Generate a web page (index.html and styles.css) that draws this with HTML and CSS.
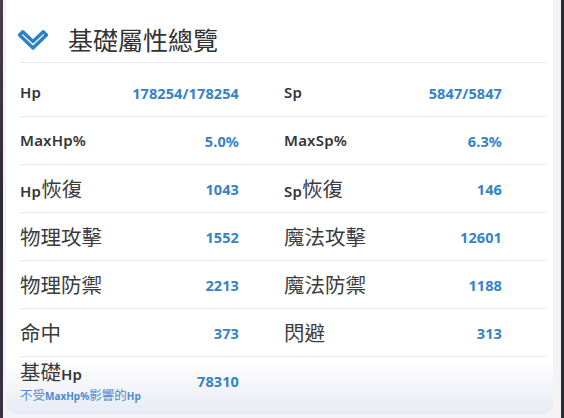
FILE: index.html
```html
<!DOCTYPE html>
<html lang="zh-Hant">
<head>
<meta charset="utf-8">
<link rel="stylesheet" href="styles.css">
</head>
<body>
<div class="screen">
  <div class="edge"></div>
  <div class="card">
    <div class="head">
      <svg class="chev" width="32" height="22" viewBox="0 0 32 22">
        <polygon points="2.5,6 5.8,2.7 16,12.5 26.2,2.7 29.5,6 16,19" fill="#fff" stroke="#2f80c2" stroke-width="3.4" stroke-linejoin="round"/>
      </svg>
      <h1 class="title">基礎屬性總覽</h1>
    </div>
    <div class="row first">
      <div class="cell"><span class="lab lat">Hp</span><span class="val">178254/178254</span></div>
      <div class="cell right"><span class="lab lat">Sp</span><span class="val">5847/5847</span></div>
    </div>
    <div class="row">
      <div class="cell"><span class="lab lat">MaxHp%</span><span class="val">5.0%</span></div>
      <div class="cell right"><span class="lab lat">MaxSp%</span><span class="val">6.3%</span></div>
    </div>
    <div class="row">
      <div class="cell"><span class="lab"><span class="lat">Hp</span>恢復</span><span class="val">1043</span></div>
      <div class="cell right"><span class="lab"><span class="lat">Sp</span>恢復</span><span class="val">146</span></div>
    </div>
    <div class="row">
      <div class="cell"><span class="lab">物理攻擊</span><span class="val">1552</span></div>
      <div class="cell right"><span class="lab">魔法攻擊</span><span class="val">12601</span></div>
    </div>
    <div class="row">
      <div class="cell"><span class="lab">物理防禦</span><span class="val">2213</span></div>
      <div class="cell right"><span class="lab">魔法防禦</span><span class="val">1188</span></div>
    </div>
    <div class="row">
      <div class="cell"><span class="lab">命中</span><span class="val">373</span></div>
      <div class="cell right"><span class="lab">閃避</span><span class="val">313</span></div>
    </div>
    <div class="row last">
      <div class="cell">
        <div class="stack">
          <span class="lab">基礎<span class="lat">Hp</span></span>
          <span class="sub">不受<span class="sublat">MaxHp%</span>影響的<span class="sublat">Hp</span></span>
        </div>
        <span class="val">78310</span>
      </div>
      <div class="cell right"></div>
    </div>
  </div>
  <div class="edge edge-r"></div>
</div>
</body>
</html>
```

FILE: styles.css
```css
html, body {
  margin: 0;
  padding: 0;
  background: #f4f4f7;
}

.screen {
  width: 564px;
  height: 418px;
  display: flex;
  background: #f3f3f6;
  overflow: hidden;
  font-family: "Noto Sans CJK TC", "Noto Sans", sans-serif;
}

.edge {
  width: 3px;
  height: 418px;
  background: linear-gradient(to bottom, #4a3c4f, #2f2a38 50%, #3b3246);
  flex: none;
}

.edge-r {
  margin-left: auto;
  background: #2f2d38;
}

.card {
  margin-left: 3px;
  width: 533px;
  height: 414px;
  padding-left: 14px;
  background: linear-gradient(to bottom, #ffffff 0, #ffffff 362px, #e7eaf3 100%);
  border-radius: 0 0 12px 12px;
  flex: none;
}

.head {
  box-sizing: border-box;
  height: 63px;
  padding-top: 17px;
  width: 526px;
  display: flex;
  align-items: center;
  border-bottom: 1px solid #e6e8ef;
}

.chev {
  margin-left: -3px;
  margin-right: 19px;
}

.title {
  margin: 0;
  margin-top: -2px;
  font-size: 25px;
  font-weight: 400;
  color: #333;
}

.row {
  width: 526px;
  height: 47px;
  display: grid;
  grid-template-columns: 263px 263px;
  border-bottom: 1px solid #e6e8f1;
}

.row.first {
  box-sizing: border-box;
  height: 54px;
  padding-top: 6px;
}

.row.last {
  border-bottom: none;
  height: 57px;
}

.cell {
  display: flex;
  align-items: center;
  justify-content: space-between;
  padding-right: 44px;
}

.cell.right {
  padding-left: 1px;
}

.lab {
  font-size: 20.5px;
  color: #3b3b3e;
  line-height: 1;
}

.lat {
  font-family: "Noto Sans", sans-serif;
  font-size: 15px;
  font-weight: 600;
  color: #353538;
  letter-spacing: 0.2px;
}

.val {
  font-family: "Noto Sans", sans-serif;
  font-size: 14.5px;
  font-weight: 700;
  color: #3583c6;
  letter-spacing: 0.1px;
}

.row.last .cell {
  align-items: flex-start;
}

.row.last .val {
  margin-top: 14px;
}

.stack {
  display: flex;
  flex-direction: column;
  padding-top: 4px;
}

.stack .lab {
  line-height: 21px;
}

.sub {
  font-size: 12.5px;
  color: #4a8bd0;
  line-height: 13px;
  margin-top: 3px;
}

.sublat {
  font-family: "Noto Sans", sans-serif;
  font-size: 10px;
  font-weight: 700;
}
```
